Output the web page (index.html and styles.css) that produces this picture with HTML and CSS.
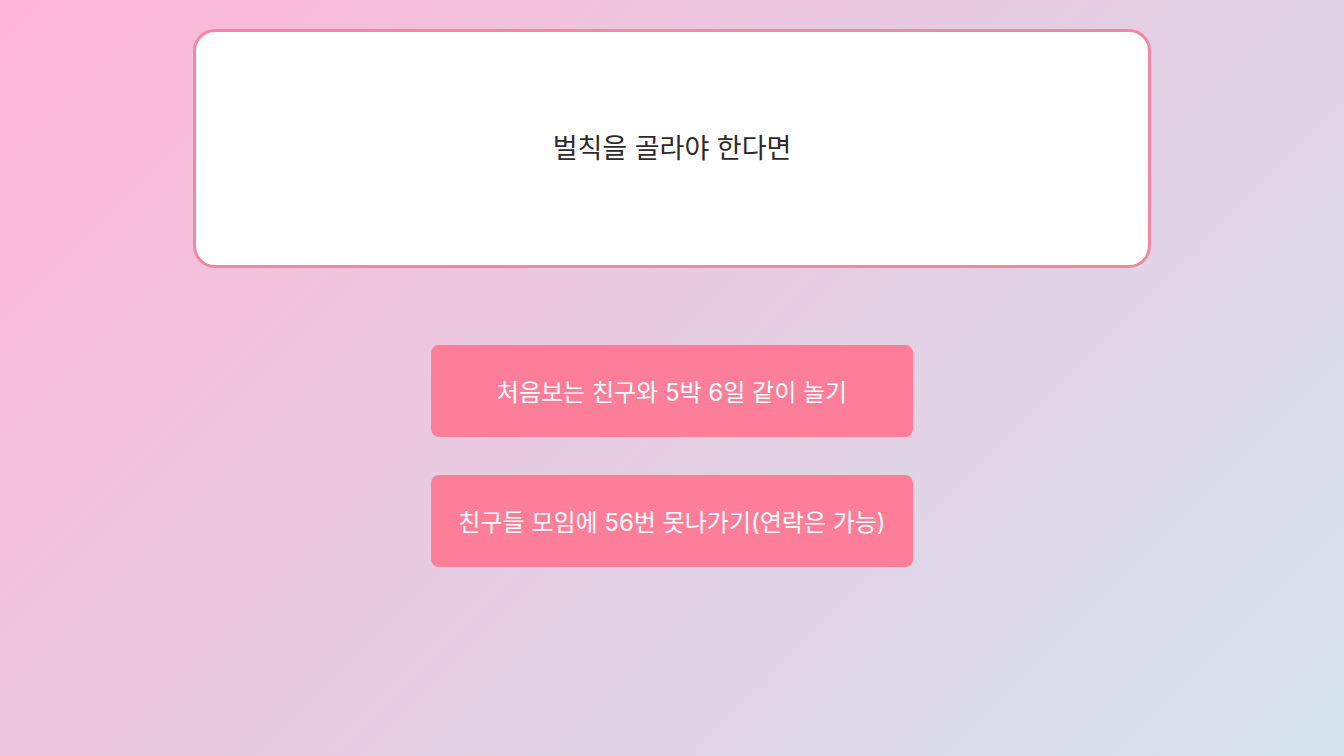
FILE: index.html
```html
<!DOCTYPE html>
<html lang="ko">
<head>
<meta charset="utf-8">
<title>벌칙 고르기</title>
<link rel="stylesheet" href="styles.css">
</head>
<body>
  <main class="game">
    <section class="question">
      <p class="question-text">벌칙을 골라야 한다면</p>
    </section>
    <div class="choices">
      <button class="choice" type="button">처음보는 친구와 5박 6일 같이 놀기</button>
      <button class="choice" type="button">친구들 모임에 56번 못나가기(연락은 가능)</button>
    </div>
  </main>
</body>
</html>
```

FILE: styles.css
```css
* {
  box-sizing: border-box;
}

html, body {
  margin: 0;
  height: 100%;
}

body {
  font-family: "Noto Sans CJK KR", "Noto Sans", sans-serif;
  background: linear-gradient(135deg, #ffb5d6 0%, #e6cde2 50%, #d5e3ee 100%);
  min-height: 756px;
}

.game {
  width: 958px;
  margin: 0 auto;
  padding-top: 29px;
  display: flex;
  flex-direction: column;
  align-items: center;
}

.question {
  width: 100%;
  height: 239px;
  background: #ffffff;
  border: 3px solid #ef88a2;
  border-radius: 22px;
  display: flex;
  align-items: center;
  justify-content: center;
  padding-bottom: 4px;
}

.question-text {
  margin: 0;
  font-size: 27px;
  color: #2b2b2b;
  font-weight: 400;
}

.choices {
  margin-top: 77px;
  display: flex;
  flex-direction: column;
  gap: 38px;
}

.choice {
  width: 482px;
  height: 92px;
  border: none;
  border-radius: 8px;
  background: #fd7e99;
  color: #ffffff;
  font-family: "Inter", "Noto Sans CJK KR", sans-serif;
  font-size: 24px;
  font-weight: 400;
  padding-bottom: 2px;
  cursor: pointer;
}
```
